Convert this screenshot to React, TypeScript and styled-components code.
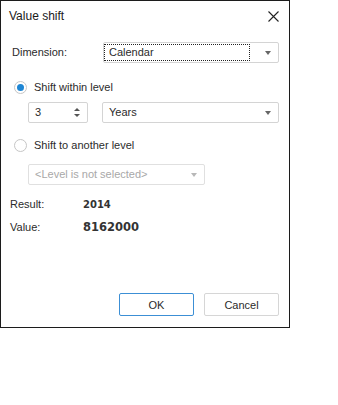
import React from "react";
import styled, { createGlobalStyle } from "styled-components";

const GlobalStyle = createGlobalStyle`
  body {
    margin: 0;
    background: #fff;
    font-family: "Liberation Sans", Arial, sans-serif;
    font-size: 11px;
    line-height: 15px;
    color: #2b2b2b;
  }
`;

const Dialog = styled.div`
  box-sizing: border-box;
  width: 290px;
  height: 328px;
  border: 1px solid #1c1c1c;
  display: flex;
  flex-direction: column;
  background: #fff;
`;

const TitleBar = styled.div`
  display: flex;
  align-items: center;
  justify-content: space-between;
  height: 30px;
  padding: 0 10px 0 8px;
`;

const Title = styled.span`
  font-size: 12px;
  color: #1a1a1a;
`;

const Close = styled.svg`
  width: 11px;
  height: 11px;
`;

const Body = styled.div`
  flex: 1;
  display: flex;
  flex-direction: column;
  padding: 11px 10px 0 11px;
`;

const Row = styled.div<{ $indent?: number; $mt?: number }>`
  display: flex;
  align-items: center;
  gap: 14px;
  padding-left: ${(p) => p.$indent ?? 0}px;
  margin-top: ${(p) => p.$mt ?? 0}px;
`;

const Label = styled.span<{ $w?: number }>`
  width: ${(p) => p.$w ?? 90}px;
  flex: none;
`;

const Combo = styled.div<{ $w: number; $disabled?: boolean }>`
  box-sizing: border-box;
  width: ${(p) => p.$w}px;
  height: 21px;
  border: 1px solid ${(p) => (p.$disabled ? "#e0e0e0" : "#d4d4d4")};
  border-radius: 2px;
  display: flex;
  align-items: center;
  padding: 0 4px 0 6px;
  color: ${(p) => (p.$disabled ? "#a8a8a8" : "#2b2b2b")};
  background: #fff;
`;

const ComboText = styled.span<{ $focused?: boolean }>`
  flex: 1;
  height: 15px;
  line-height: 15px;
  margin-left: ${(p) => (p.$focused ? "-5px" : "0")};
  padding-left: ${(p) => (p.$focused ? "4px" : "0")};
  outline: ${(p) => (p.$focused ? "1px dotted #222" : "none")};
  margin-right: ${(p) => (p.$focused ? "16px" : "0")};
`;

const Caret = styled.span<{ $disabled?: boolean }>`
  width: 0;
  height: 0;
  border-left: 3.5px solid transparent;
  border-right: 3.5px solid transparent;
  border-top: 4px solid ${(p) => (p.$disabled ? "#b8b8b8" : "#666")};
  margin-right: 3px;
`;

const RadioRow = styled.label<{ $mt: number }>`
  display: flex;
  align-items: center;
  gap: 7px;
  height: 15px;
  margin-top: ${(p) => p.$mt}px;
  padding-left: 2px;
`;

const RadioCircle = styled.span<{ $checked?: boolean }>`
  box-sizing: border-box;
  width: 13px;
  height: 13px;
  border-radius: 50%;
  border: 1px solid #c6c6c6;
  display: flex;
  align-items: center;
  justify-content: center;
  &::after {
    content: "";
    width: 7px;
    height: 7px;
    border-radius: 50%;
    background: ${(p) => (p.$checked ? "#1e86d4" : "transparent")};
  }
`;

const Spinner = styled.div`
  box-sizing: border-box;
  width: 60px;
  height: 21px;
  border: 1px solid #d4d4d4;
  border-radius: 2px;
  display: flex;
  align-items: center;
  padding: 0 7px 0 6px;
  justify-content: space-between;
`;

const SpinArrows = styled.span`
  display: flex;
  flex-direction: column;
  gap: 3px;
  &::before,
  &::after {
    content: "";
    width: 0;
    height: 0;
    border-left: 3px solid transparent;
    border-right: 3px solid transparent;
  }
  &::before {
    border-bottom: 3px solid #555;
  }
  &::after {
    border-top: 3px solid #555;
  }
`;

const ResultRow = styled.div<{ $mt: number }>`
  display: flex;
  align-items: center;
  height: 15px;
  margin-top: ${(p) => p.$mt}px;
  margin-left: -2px;
`;

const Strong = styled.span<{ $size: number }>`
  font-family: "DejaVu Sans", "Liberation Sans", sans-serif;
  font-weight: bold;
  font-size: ${(p) => p.$size}px;
  color: #333;
`;

const Footer = styled.div`
  display: flex;
  justify-content: flex-end;
  gap: 10px;
  padding: 0 10px 11px 0;
`;

const Button = styled.button<{ $primary?: boolean }>`
  box-sizing: border-box;
  width: 75px;
  height: 23px;
  background: #fff;
  border: 1px solid ${(p) => (p.$primary ? "#3c8fd5" : "#d6d6d6")};
  border-radius: 2px;
  font-family: "Liberation Sans", Arial, sans-serif;
  font-size: 11px;
  color: #2b2b2b;
  padding: 0;
`;

export default function App() {
  return (
    <>
      <GlobalStyle />
      <Dialog>
        <TitleBar>
          <Title>Value shift</Title>
          <Close viewBox="0 0 11 11">
            <path d="M0.5 0.5 L10.5 10.5 M10.5 0.5 L0.5 10.5" stroke="#222" strokeWidth="1.1" />
          </Close>
        </TitleBar>
        <Body>
          <Row>
            <Label $w={77}>Dimension:</Label>
            <Combo $w={177}>
              <ComboText $focused>Calendar</ComboText>
              <Caret />
            </Combo>
          </Row>
          <RadioRow $mt={17}>
            <RadioCircle $checked />
            <span>Shift within level</span>
          </RadioRow>
          <Row $indent={16} $mt={7}>
            <Spinner>
              <span>3</span>
              <SpinArrows />
            </Spinner>
            <Combo $w={177}>
              <ComboText>Years</ComboText>
              <Caret />
            </Combo>
          </Row>
          <RadioRow $mt={15}>
            <RadioCircle />
            <span>Shift to another level</span>
          </RadioRow>
          <Row $indent={16} $mt={11}>
            <Combo $w={177} $disabled>
              <ComboText>&lt;Level is not selected&gt;</ComboText>
              <Caret $disabled />
            </Combo>
          </Row>
          <ResultRow $mt={12}>
            <Label $w={73}>Result:</Label>
            <Strong $size={10}>2014</Strong>
          </ResultRow>
          <ResultRow $mt={8}>
            <Label $w={73}>Value:</Label>
            <Strong $size={11.5}>8162000</Strong>
          </ResultRow>
        </Body>
        <Footer>
          <Button $primary>OK</Button>
          <Button>Cancel</Button>
        </Footer>
      </Dialog>
    </>
  );
}
